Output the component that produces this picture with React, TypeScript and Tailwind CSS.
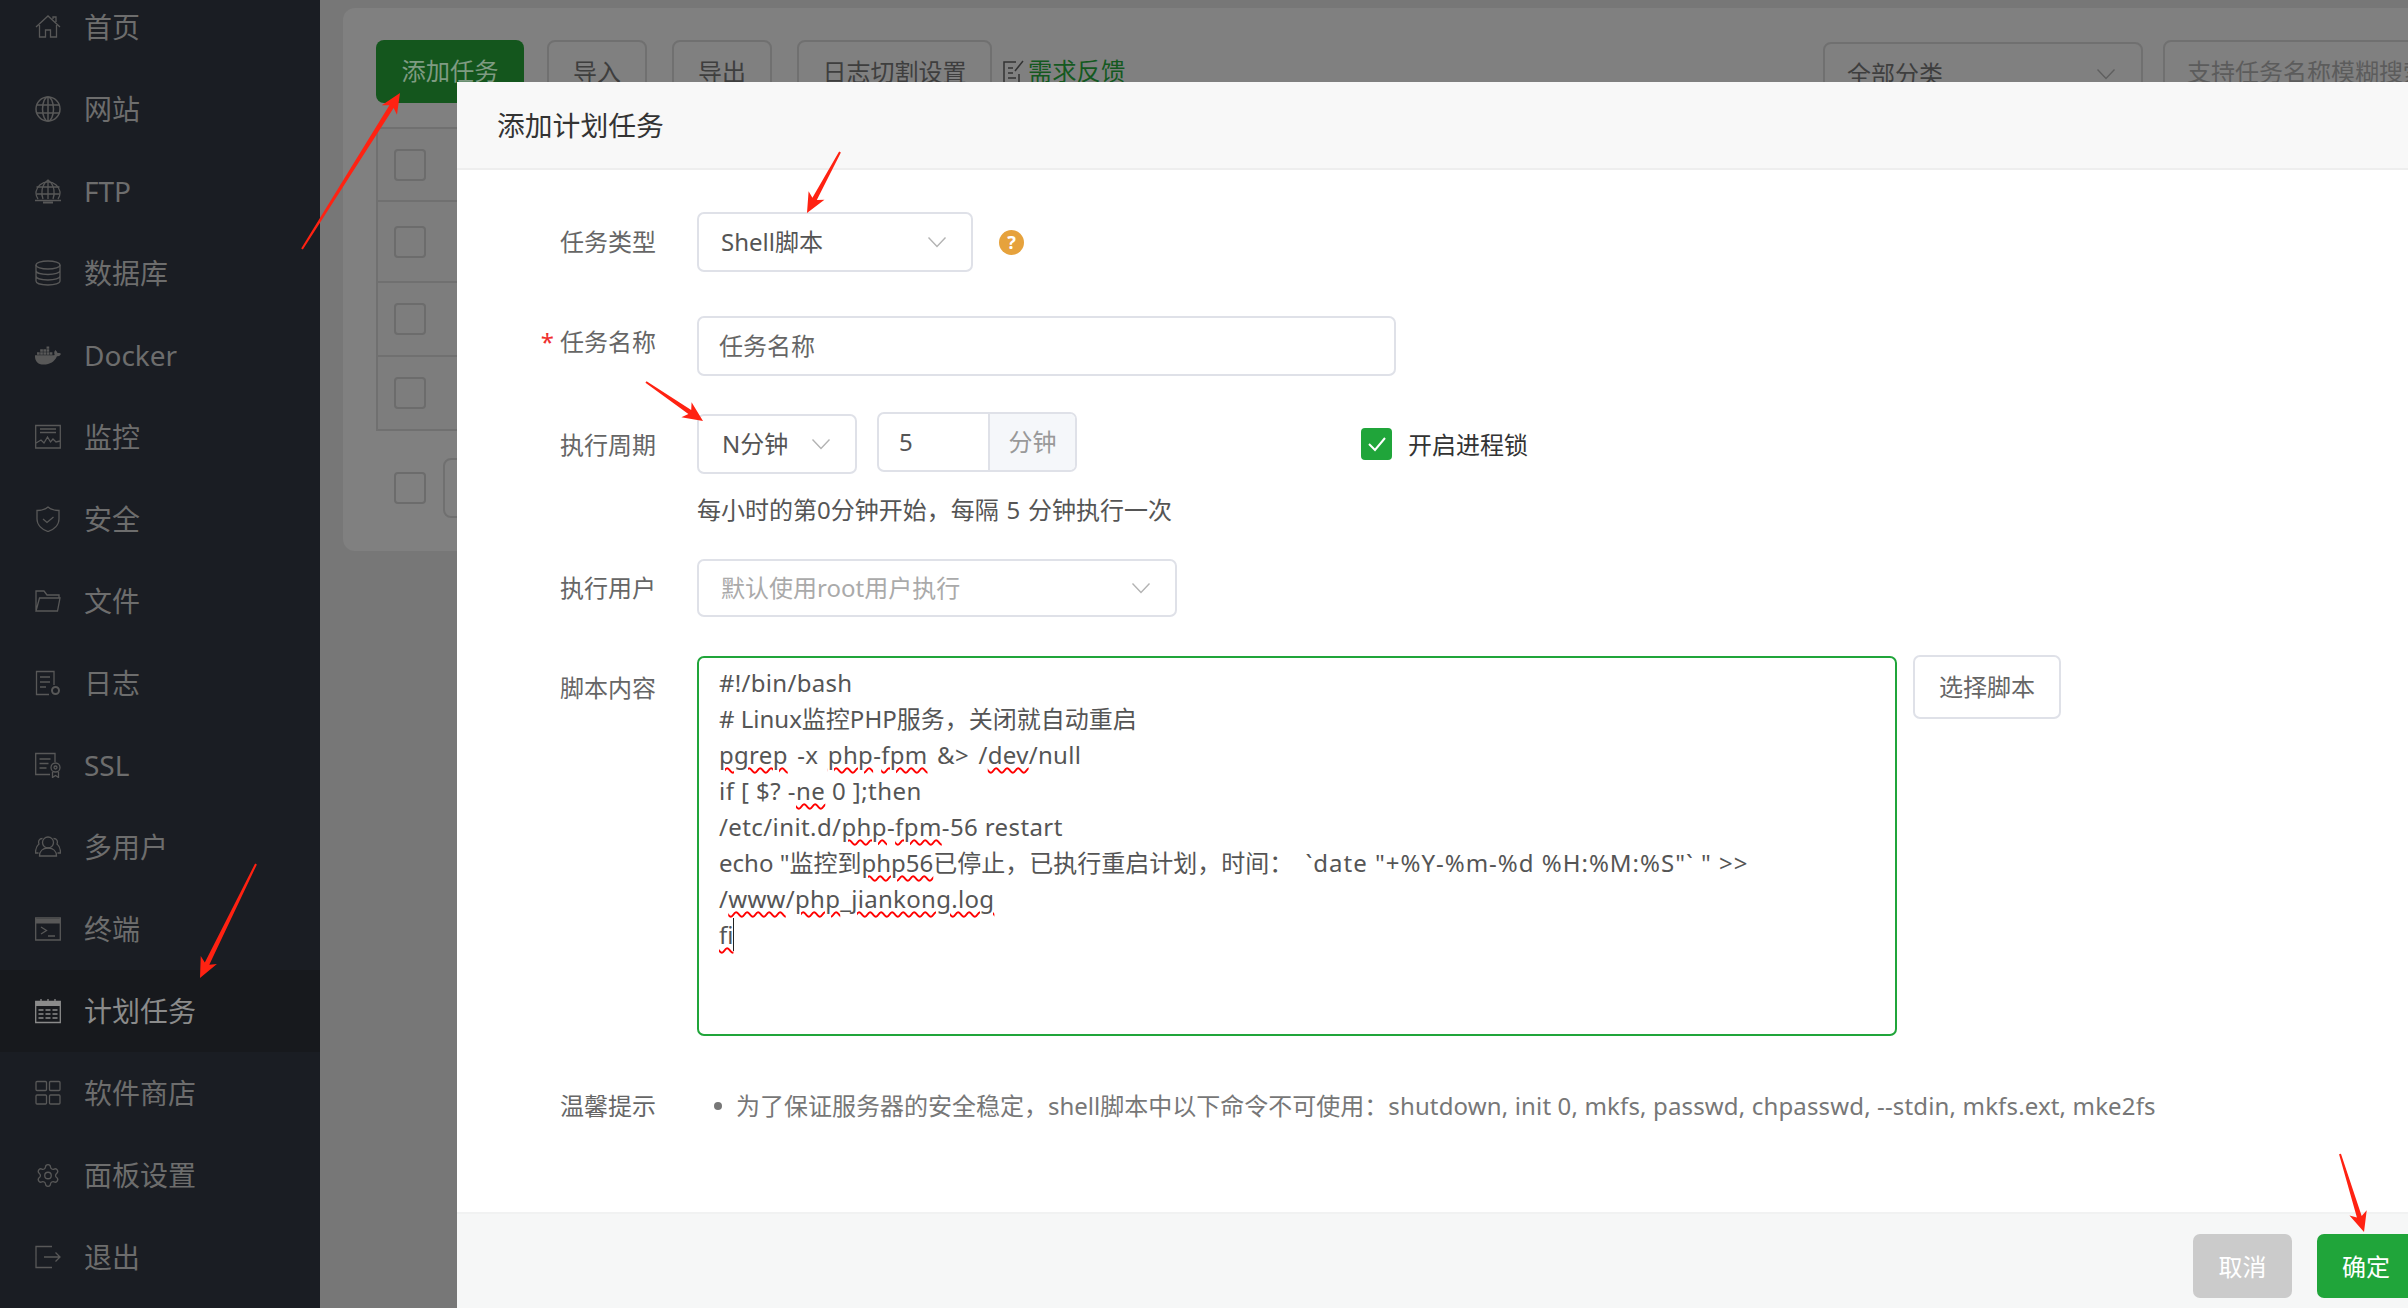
import type { ReactNode } from 'react';
import { Settings } from 'lucide-react';
import { FaDocker } from 'react-icons/fa';

const ic = { width: 26, height: 26, viewBox: '0 0 26 26', fill: 'none', stroke: 'currentColor', strokeWidth: 1.3 };

const menu: { label: string; icon: ReactNode; active?: boolean }[] = [
  {
    label: '首页',
    icon: (
      <svg {...ic}>
        <path d="M1 13 13 2l12 11M4.500 11v12h6v-7h5v7h6V11M18 5V3h3v5" />
      </svg>
    ),
  },
  {
    label: '网站',
    icon: (
      <svg {...ic} strokeWidth={1.5}>
        <circle cx="13" cy="13" r="12" />
        <ellipse cx="13" cy="13" rx="5.500" ry="12" />
        <path d="M13 1v24M2 9h22M2 17h22" />
      </svg>
    ),
  },
  {
    label: 'FTP',
    icon: (
      <svg {...ic}>
        <path d="M3 21a12 11 0 1 1 20 0" />
        <path d="M8 21c-2-5-2-14 5-19 7 5 7 14 5 19M13 2v19M1.500 9h23M1.500 16h23M0 22.500h26" />
        <path d="M8 24.500h10" strokeWidth={2} />
      </svg>
    ),
  },
  {
    label: '数据库',
    icon: (
      <svg {...ic}>
        <ellipse cx="13" cy="5" rx="12" ry="4" />
        <path d="M1 5v16c0 2.500 5.500 4 12 4s12-1.500 12-4V5M1 10.500c0 2.500 5.500 4 12 4s12-1.500 12-4M1 16c0 2.500 5.500 4 12 4s12-1.500 12-4" />
      </svg>
    ),
  },
  { label: 'Docker', icon: <FaDocker size={27} /> },
  {
    label: '监控',
    icon: (
      <svg {...ic}>
        <path d="M.7 1.500h24.600v22.500H.7zM5 5h16M5 8.500h16" />
        <path d="M1 19l5-3 3 3 3.500-6 3 5 2.500-3 3 3 4-1" />
      </svg>
    ),
  },
  {
    label: '安全',
    icon: (
      <svg {...ic}>
        <path d="M13 1c3 2.500 7 3.500 11 3.500V13c0 6-5 10.500-11 12.500C7 23.500 2 19 2 13V4.500C6 4.500 10 3.500 13 1z" />
        <path d="m8 13 4 3.500L18.500 11" />
      </svg>
    ),
  },
  {
    label: '文件',
    icon: (
      <svg {...ic}>
        <path d="M1 23V3h8l3 4h12v3M1 23h21.500L25 10H4.500z" />
      </svg>
    ),
  },
  {
    label: '日志',
    icon: (
      <svg {...ic}>
        <path d="M19 15V1.500H1.500v23H14M5 7h10M5 12h10M5 17h6" />
        <circle cx="20.500" cy="20.500" r="3.500" strokeWidth={2} />
      </svg>
    ),
  },
  {
    label: 'SSL',
    icon: (
      <svg {...ic}>
        <path d="M20 10V1.500H.7v21H15M4.500 7h11M4.500 11.500h9M4.500 16h7" />
        <circle cx="20.500" cy="15.500" r="4.500" />
        <circle cx="20.500" cy="15.500" r="1.500" />
        <path d="M17.500 20v5.500l3-2 3 2V20" />
      </svg>
    ),
  },
  {
    label: '多用户',
    icon: (
      <svg {...ic}>
        <circle cx="13" cy="8.500" r="5.500" />
        <path d="M4.500 22c0-5 3.500-8 8.500-8s8.500 3 8.500 8zM7.500 4.500C4 4.500 3 7.500 4 10c-2 1.500-3.500 4.500-3.500 9h3M18.500 4.500c3.500 0 4.500 3 3.500 5.500 2 1.500 3.500 4.500 3.500 9h-3" />
      </svg>
    ),
  },
  {
    label: '终端',
    icon: (
      <svg {...ic}>
        <path d="M.7 2h24.600v22H.7z" />
        <path d="M1 3h24v4.500H1z" fill="currentColor" strokeWidth={0} />
        <path d="m6 11 5.500 3.500L6 18M13 20h7" />
      </svg>
    ),
  },
  {
    label: '计划任务',
    active: true,
    icon: (
      <svg {...ic}>
        <path d="M.7 3.500h24.600v21H.7z" />
        <path d="M1 4h24v4H1z" fill="currentColor" strokeWidth={0} />
        <path d="M6 1v4M13 1v4M20 1v4M3.500 12h5M10.500 12h5M17.500 12h5M3.500 16h5M10.500 16h5M17.500 16h5M3.500 20h5M10.500 20h5M17.500 20h5" />
      </svg>
    ),
  },
  {
    label: '软件商店',
    icon: (
      <svg {...ic}>
        <rect x="1" y="1.500" width="10.500" height="9" rx="1" />
        <rect x="14.500" y="1.500" width="10.500" height="9" rx="1" />
        <rect x="1" y="15" width="10.500" height="9" rx="1" />
        <rect x="14.500" y="15" width="10.500" height="9" rx="1" />
      </svg>
    ),
  },
  { label: '面板设置', icon: <Settings size={27} strokeWidth={1.2} /> },
  {
    label: '退出',
    icon: (
      <svg {...ic}>
        <path d="M17 2.500H1v21h16M9 13h16M20.500 8.500 25 13l-4.500 4.500" />
      </svg>
    ),
  },
];

function Chevron({ className = 'text-[#b3b3b3]' }: { className?: string }) {
  return (
    <svg width="20" height="12" viewBox="0 0 20 12" fill="none" stroke="currentColor" strokeWidth="1.400" className={className}>
      <path d="m1.500 1.500 8.500 9 8.500-9" />
    </svg>
  );
}

function Sidebar() {
  return (
    <aside className="w-[320px] shrink-0 bg-[#1a1d23] overflow-hidden">
      <div className="-mt-[14px]">
        {menu.map((m) => (
          <div
            key={m.label}
            className={
              m.active
                ? 'h-[82px] flex items-center pl-[35px] gap-[23px] bg-[#17191d] text-[#8b8b8b]'
                : 'h-[82px] flex items-center pl-[35px] gap-[23px] text-[#6d6d6d]'
            }
          >
            <span className={m.active ? 'w-[26px] flex justify-center text-[#8b8b8b]' : 'w-[26px] flex justify-center text-[#585858]'}>
              {m.icon}
            </span>
            <span className="text-[28px] leading-none">{m.label}</span>
          </div>
        ))}
      </div>
    </aside>
  );
}

function Backdrop() {
  const btn = 'h-[63px] rounded-[8px] border-2 border-[#707070] flex items-center justify-center text-[24px] text-[#3e3e3e]';
  return (
    <main className="flex-1 min-w-0 bg-[#777777] pt-[8px] pl-[23px] overflow-hidden">
      <div className="h-[543px] bg-[#808080] rounded-l-[12px] pl-[33px] pt-[32px]">
        <div className="flex items-start">
          <div className="w-[148px] h-[63px] rounded-[8px] bg-[#14561d] text-[#7f9b82] text-[24.300px] flex items-center justify-center">添加任务</div>
          <div className={`${btn} w-[100px] ml-[23px]`}>导入</div>
          <div className={`${btn} w-[100px] ml-[25px]`}>导出</div>
          <div className={`${btn} w-[195px] ml-[25px]`}>日志切割设置</div>
          <div className="ml-[10px] h-[63px] flex items-center gap-[2px] text-[24.300px] text-[#14591f]">
            <svg width="24" height="24" viewBox="0 0 24 24" fill="none" stroke="#333" strokeWidth="1.500">
              <path d="M14 2H2v21h15v-9M6 8h5M6 13h5M6 18h8M13 11 21 1" />
            </svg>
            需求反馈
          </div>
          <div className="ml-auto w-[320px] h-[63px] mt-[2px] rounded-[8px] border-2 border-[#707070] flex items-center justify-between pl-[22px] pr-[25px] text-[24px] text-[#3e3e3e]">
            全部分类
            <Chevron className="text-[#5f5f5f]" />
          </div>
          <div className="ml-[20px] -mr-[60px] w-[305px] shrink-0 h-[63px] rounded-[8px] border-2 border-[#707070] flex items-center pl-[22px] text-[24px] text-[#5c5c5c] whitespace-nowrap overflow-hidden">
            支持任务名称模糊搜索
          </div>
        </div>

        <div className="mt-[22px] border-l-2 border-t-2 border-[#707070] bg-[#7d7d7d]">
          {[73, 81, 74, 74].map((h, i) => (
            <div key={i} className="border-b-2 border-[#707070] flex items-center pl-[16px]" style={{ height: h }}>
              <div className="w-[32px] h-[32px] rounded-[4px] border-2 border-[#6c6c6c]" />
            </div>
          ))}
        </div>
        <div className="mt-[27px] flex items-start">
          <div className="mt-[14px] ml-[18px] w-[32px] h-[32px] rounded-[4px] border-2 border-[#6c6c6c]" />
          <div className="ml-[17px] w-[60px] h-[60px] rounded-[8px] border-2 border-[#707070]" />
        </div>
      </div>
    </main>
  );
}

function Label({ children, className = '' }: { children: ReactNode; className?: string }) {
  return <div className={`w-[199px] shrink-0 mr-[41px] text-right text-[24px] leading-[36px] text-[#666666] ${className}`}>{children}</div>;
}

function Err({ children }: { children: ReactNode }) {
  return <span className="underline decoration-wavy decoration-[#ff0000] decoration-[2px] underline-offset-[3px]">{children}</span>;
}

function Modal() {
  const box = 'rounded-[7px] border-2 border-[#dfe1e8] bg-white flex items-center';
  return (
    <section className="absolute left-[457px] right-0 top-[82px] bottom-0 bg-white flex flex-col overflow-hidden">
      <header className="h-[88px] shrink-0 bg-[#f8f8f8] border-b-2 border-[#eeeeee] flex items-center pl-[40px] pt-[2px] text-[27.800px] text-[#333333]">添加计划任务</header>

      <div className="h-[1042px] shrink-0 pt-[42px]">
        <div className="flex items-center">
          <Label>任务类型</Label>
          <div className={`${box} w-[276px] h-[60px] pl-[22px] pr-[24px] justify-between text-[24px] text-[#555555]`}>
            Shell脚本
            <Chevron />
          </div>
          <div className="ml-[26px] w-[25px] h-[25px] rounded-full bg-[#e6a23c] text-white text-[18px] font-bold flex items-center justify-center">?</div>
        </div>

        <div className="mt-[44px] flex items-start">
          <Label className="pt-[8px]">
            <span className="text-[#ef2f2f] mr-[6px]">*</span>任务名称
          </Label>
          <div className={`${box} w-[699px] h-[60px] pl-[20px] text-[24px] text-[#666666]`}>任务名称</div>
        </div>

        <div className="mt-[36px] flex items-start">
          <Label className="pt-[15px]">执行周期</Label>
          <div className={`${box} mt-[2px] w-[160px] h-[60px] pl-[23px] pr-[24px] justify-between text-[24px] text-[#555555]`}>
            N分钟
            <Chevron />
          </div>
          <div className={`${box} ml-[20px] w-[200px] h-[60px] overflow-hidden`}>
            <div className="w-[109px] pl-[20px] text-[24px] text-[#555555]">5</div>
            <div className="flex-1 h-full bg-[#f5f7fa] border-l-2 border-[#dfe1e8] flex items-center justify-center text-[24px] text-[#999999]">分钟</div>
          </div>
          <div className="ml-[284px] mt-[16px] w-[31px] h-[32px] rounded-[4px] bg-[#20a53a] flex items-center justify-center">
            <svg width="22" height="18" viewBox="0 0 22 18" fill="none" stroke="white" strokeWidth="2">
              <path d="m3 9 6 6L19 3" />
            </svg>
          </div>
          <div className="ml-[16px] pt-[15px] text-[24px] leading-[36px] text-[#333333]">开启进程锁</div>
        </div>

        <div className="mt-[18px] ml-[240px] text-[24px] leading-[36px] text-[#555555] [word-spacing:1.500px]">每小时的第0分钟开始，每隔 5 分钟执行一次</div>

        <div className="mt-[31px] flex items-center">
          <Label>执行用户</Label>
          <div className={`${box} w-[480px] h-[58px] pl-[22px] pr-[24px] justify-between text-[24px] text-[#aaaaaa]`}>
            默认使用root用户执行
            <Chevron />
          </div>
        </div>

        <div className="mt-[39px] flex items-start">
          <Label className="pt-[14px]">脚本内容</Label>
          <div className="w-[1200px] h-[380px] rounded-[7px] border-2 border-[#20a53a] pl-[20px] pt-[7px] text-[24px] leading-[36px] text-[#555555] whitespace-nowrap">
            <div className="tracking-[0.3px]">#!/bin/bash</div>
            <div># Linux监控PHP服务，关闭就自动重启</div>
            <div className="tracking-[0.3px] [word-spacing:3px]">
              <Err>pgrep</Err> -x <Err>php</Err>-<Err>fpm</Err> &amp;&gt; /<Err>dev</Err>/null
            </div>
            <div className="tracking-[0.450px]">
              if [ $? -<Err>ne</Err> 0 ];then
            </div>
            <div className="tracking-[0.4px]">
              /etc/init.d/<Err>php</Err>-<Err>fpm</Err>-56 restart
            </div>
            <div>
              echo "监控到<Err>php56</Err>已停止，已执行重启计划，时间：
              <span className="ml-[5px] tracking-[1px]"> `date "+%Y-%m-%d %H:%M:%S"` " &gt;&gt;</span>
            </div>
            <div className="tracking-[0.3px]">
              /<Err>www</Err>/<Err>php</Err>_<Err>jiankong.log</Err>
            </div>
            <div>
              <span className="border-r border-[#222222]">
                <Err>fi</Err>
              </span>
            </div>
          </div>
          <div className="ml-[16px] -mt-[1px] w-[148px] h-[64px] rounded-[7px] border-2 border-[#dfe1e8] flex items-center justify-center text-[24px] text-[#666666]">选择脚本</div>
        </div>

        <div className="mt-[52px] flex items-start">
          <Label>温馨提示</Label>
          <div className="pl-[17px] flex items-center text-[24px] leading-[36px] text-[#777777] whitespace-nowrap">
            <span className="w-[8px] h-[8px] rounded-full bg-[#777777] mr-[14px]" />
            <span>
              为了保证服务器的安全稳定，shell脚本中以下命令不可使用：<span className="tracking-[0.150px]">shutdown, init 0, mkfs, passwd, chpasswd, --stdin, mkfs.ext, mke2fs</span>
            </span>
          </div>
        </div>
      </div>

      <footer className="flex-1 bg-[#f6f7f7] border-t-2 border-[#f1f2f2] flex justify-end gap-[25px] pt-[20px] text-[24px] text-white overflow-hidden">
        <div className="w-[99px] h-[64px] pt-[2px] rounded-[7px] bg-[#cbcbcb] flex items-center justify-center">取消</div>
        <div className="w-[91px] h-[64px] pt-[2px] rounded-l-[7px] bg-[#20a53a] flex items-center pl-[25px]">确定</div>
      </footer>
    </section>
  );
}

function Arrow({ x1, y1, x2, y2 }: { x1: number; y1: number; x2: number; y2: number }) {
  const len = Math.hypot(x2 - x1, y2 - y1);
  const ux = (x2 - x1) / len;
  const uy = (y2 - y1) / len;
  const nx = -uy;
  const ny = ux;
  const p = (along: number, side: number) => `${x1 + ux * along + nx * side},${y1 + uy * along + ny * side}`;
  const pts = [p(0, -1), p(len - 16, -2.500), p(len - 20, -9), p(len, 0), p(len - 20, 9), p(len - 16, 2.500), p(0, 1)];
  return <polygon points={pts.join(' ')} fill="#ff2212" />;
}

export default function App() {
  return (
    <div className="relative w-[2408px] h-[1308px] flex overflow-hidden font-['Noto_Sans','Noto_Sans_CJK_SC',sans-serif]">
      <Sidebar />
      <Backdrop />
      <Modal />
      <svg className="absolute inset-0 pointer-events-none" width="2408" height="1308">
        <Arrow x1={302} y1={249} x2={400} y2={93} />
        <Arrow x1={840} y1={152} x2={807} y2={213} />
        <Arrow x1={646} y1={382} x2={703} y2={421} />
        <Arrow x1={256} y1={864} x2={200} y2={978} />
        <Arrow x1={2340} y1={1154} x2={2364} y2={1232} />
      </svg>
    </div>
  );
}
